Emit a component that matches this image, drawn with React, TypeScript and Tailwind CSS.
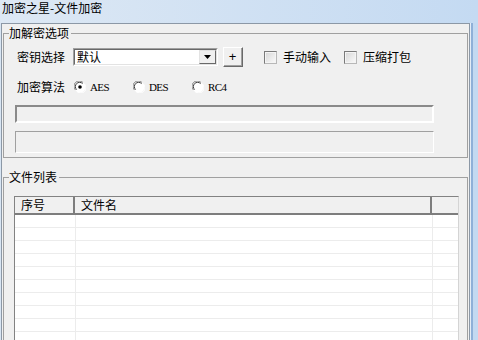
import React from 'react';

const cn = { fontFamily: '"Noto Sans CJK SC", "Noto Sans", sans-serif' };

function Radio({ checked, label }: { checked?: boolean; label: string }) {
  return (
    <div className="flex items-center">
      <svg width="12" height="12" viewBox="0 0 12 12">
        <circle cx="6" cy="6" r="5.5" fill="#ffffff" />
        <path d="M1.5 9 A5 5 0 0 1 9 1.5" stroke="#808080" strokeWidth="1" fill="none" />
        <path d="M2.6 8.6 A4 4 0 0 1 8.6 2.6" stroke="#404040" strokeWidth="1" fill="none" />
        <path d="M3 10.5 A5 5 0 0 0 10.5 3" stroke="#ffffff" strokeWidth="1" fill="none" />
        {checked && <circle cx="6" cy="6" r="1.8" fill="#000000" />}
      </svg>
      <span className="ml-[4px] text-[11px] leading-[12px] tracking-[-0.6px] text-black" style={{ fontFamily: '"Liberation Serif", serif' }}>
        {label}
      </span>
    </div>
  );
}

function Checkbox({ label }: { label: string }) {
  return (
    <div className="flex items-center">
      <div className="w-[13px] h-[13px] border border-t-[#7a7a7a] border-l-[#7a7a7a] border-b-[#b8b8b8] border-r-[#b8b8b8] bg-gradient-to-br from-[#d6d6d6] to-[#fbfbfb]">
        <div className="w-full h-full border border-[#f4f4f4]" />
      </div>
      <span className="ml-[6px] text-[12px] leading-[14px]">{label}</span>
    </div>
  );
}

function Sunken({ className, children }: { className: string; children?: React.ReactNode }) {
  return (
    <div className={`border border-t-[#a0a0a0] border-l-[#a0a0a0] border-b-white border-r-white ${className}`}>
      <div className="w-full h-full border border-t-[#696969] border-l-[#696969] border-b-[#e3e3e3] border-r-[#e3e3e3]">
        {children}
      </div>
    </div>
  );
}

export default function App() {
  const rows = Array.from({ length: 10 });

  return (
    <div className="w-[478px] h-[340px] overflow-hidden flex flex-col bg-[#f0f0f0] text-black" style={cn}>
      {/* Title bar */}
      <div className="h-[23px] shrink-0 pl-[2px] bg-gradient-to-r from-[#dde8f4] to-[#c4daf2] text-[12px] leading-[16px]">
        加密之星-文件加密
      </div>

      <div className="flex flex-1 min-h-0">
        <div className="w-[1px] bg-[#d8e5f3]" />

        {/* Client area */}
        <div className="w-[469px] border-t border-l border-r border-[#8c98a6] bg-[#f0f0f0] overflow-hidden">
          <fieldset className="ml-[1px] mt-[2px] w-[465px] border border-[#a0a0a0] pl-[5px] pb-[4px]">
            <legend className="pr-[2px] text-[12px] leading-[14px]">加解密选项</legend>

            <div className="mt-[7px] ml-[8px] h-[20px] flex items-center">
              <span className="w-[48px] text-[12px] leading-[14px]">密钥选择</span>
              <Sunken className="ml-[8px] w-[145px] h-[18px] bg-white">
                <div className="flex h-full items-center bg-white">
                  <span className="pl-[2px] flex-1 text-[12px] leading-[14px]">默认</span>
                  <div className="w-[17px] h-full border border-t-[#e3e3e3] border-l-[#e3e3e3] border-b-[#696969] border-r-[#696969] bg-[#f0f0f0] flex items-center justify-center">
                    <svg width="7" height="4" viewBox="0 0 7 4">
                      <path d="M0 0 H7 L3.5 4 Z" fill="#000000" />
                    </svg>
                  </div>
                </div>
              </Sunken>
              <div className="ml-[5px] w-[20px] h-[20px] border border-t-white border-l-white border-b-[#696969] border-r-[#696969] bg-[#f0f0f0]">
                <div className="w-full h-full border-b border-r border-[#a0a0a0] flex items-center justify-center text-[13px] leading-none" style={{ fontFamily: '"Liberation Sans", sans-serif' }}>
                  +
                </div>
              </div>
              <div className="ml-[21px]">
                <Checkbox label="手动输入" />
              </div>
              <div className="ml-[13px]">
                <Checkbox label="压缩打包" />
              </div>
            </div>

            <div className="mt-[10px] ml-[8px] h-[20px] flex items-center">
              <span className="w-[48px] text-[12px] leading-[14px]">加密算法</span>
              <div className="ml-[9px] flex items-center gap-[24px]">
                <Radio checked label="AES" />
                <Radio label="DES" />
                <Radio label="RC4" />
              </div>
            </div>

            <div className="mt-[8px] ml-[6px] w-[419px] h-[18px] border-2 border-t-[#8a8a8a] border-l-[#8a8a8a] border-b-white border-r-white bg-[#f0f0f0]" />
            <div className="mt-[8px] ml-[6px] w-[419px] h-[22px] border border-t-[#a0a0a0] border-l-[#a0a0a0] border-b-white border-r-white bg-[#f0f0f0]" />
          </fieldset>

          <fieldset className="ml-[1px] mt-[12px] w-[465px] h-[220px] border border-[#a0a0a0] pl-[5px]">
            <legend className="pr-[2px] text-[12px] leading-[14px]">文件列表</legend>

            <div className="mt-[12px] ml-[5px] w-[445px] h-[180px] border-t border-l border-r border-t-[#828282] border-l-[#828282] border-r-[#d4d4d4] bg-white">
              <div className="h-[18px] flex border-b-2 border-[#7d7d7d] bg-[#f0f0f0] text-[12px] leading-[14px]">
                <div className="w-[60px] border-r-2 border-[#7d7d7d] pl-[6px] pt-[1px]">序号</div>
                <div className="w-[357px] border-r-2 border-[#7d7d7d] pl-[6px] pt-[1px]">文件名</div>
                <div className="flex-1" />
              </div>
              {rows.map((_, i) => (
                <div key={i} className="h-[13px] flex border-b border-[#ececec]">
                  <div className="w-[61px] border-r border-[#ececec]" />
                  <div className="w-[357px] border-r border-[#ececec]" />
                  <div className="flex-1" />
                </div>
              ))}
            </div>
          </fieldset>
        </div>

        {/* Right frame */}
        <div className="w-[1px] bg-[#e4ecf5]" />
        <div className="w-[2px] bg-[#8fb0d8]" />
        <div className="w-[5px] bg-[#c3d9f1]" />
      </div>
    </div>
  );
}
